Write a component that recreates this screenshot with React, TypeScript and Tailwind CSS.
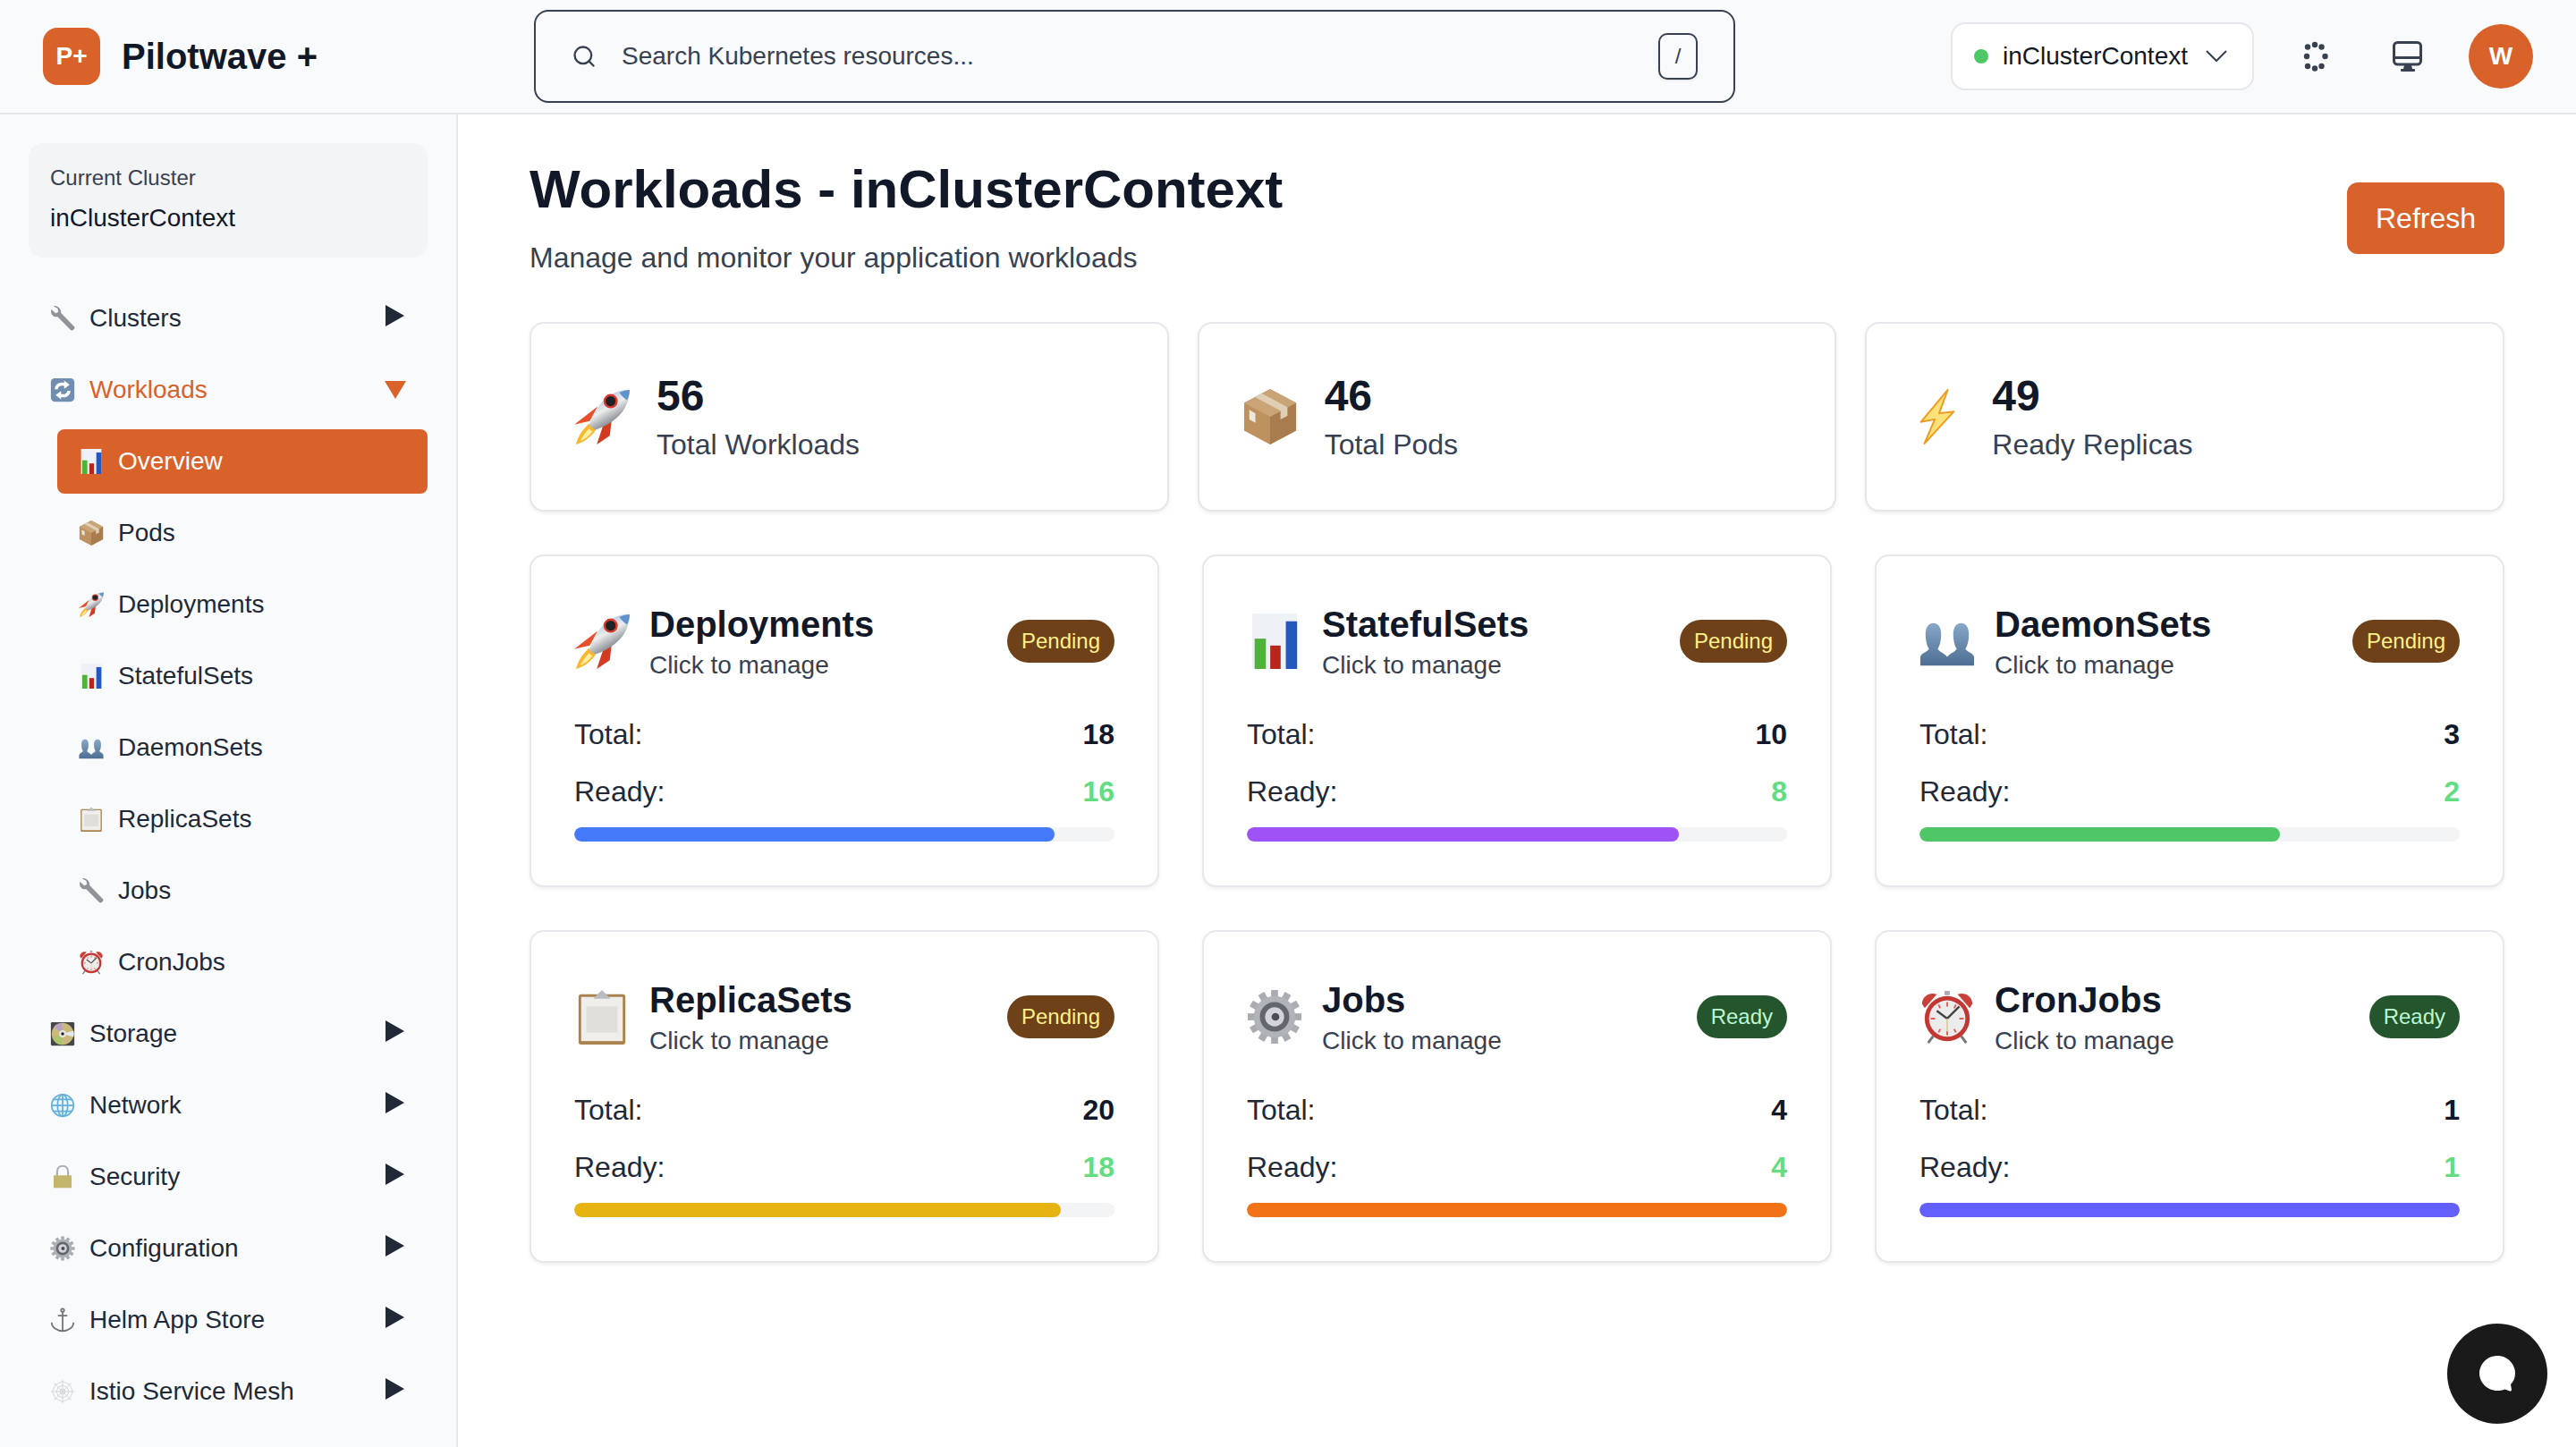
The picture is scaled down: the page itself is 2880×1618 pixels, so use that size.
import { Search } from "lucide-react";
import type { ReactNode } from "react";

function Rocket({ className }: { className?: string }) {
  return (
    <svg viewBox="0 0 64 64" className={className}>
      <defs>
        <linearGradient id="rocketBody" x1="0.2" y1="0" x2="0.8" y2="1">
          <stop offset="0" stopColor="#8fb0d6" />
          <stop offset="0.45" stopColor="#eceded" />
          <stop offset="0.75" stopColor="#8c9197" />
          <stop offset="1" stopColor="#4f7fb8" />
        </linearGradient>
      </defs>
      <path d="M27 20 L0 41 L18 37 Z" fill="#e8502c" />
      <path d="M37 31 L26 64 L41 54 L44 29 Z" fill="#d23a22" />
      <path d="M17 40 L25 47 C19 56 10 62 2 64 C4 56 9 47 17 40 Z" fill="#f9b62e" />
      <path d="M17 46 L21 49 C17 54 12 58 7 60 C9 55 13 50 17 46 Z" fill="#fff0a0" />
      <path d="M64 1 C50 0 36 8 28 20 C22 29 20 36 17 42 L24 47 C34 44 46 38 55 27 C61 19 64 10 64 1 Z" fill="url(#rocketBody)" />
      <path d="M64 1 C60 1 56 2 52 4 C55 8 58 11 61 13 C63 9 64 5 64 1 Z" fill="#5f93cf" />
      <circle cx="42" cy="14" r="7" fill="#1f2227" stroke="#d9392b" strokeWidth="2.5" />
    </svg>
  );
}

function Box({ className }: { className?: string }) {
  return (
    <svg viewBox="0 0 64 64" className={className}>
      <path d="M32 0 L62 16 L62 48 L32 64 L2 48 L2 16 Z" fill="#bd925f" />
      <path d="M32 32 L62 16 L62 48 L32 64 Z" fill="#a87c4f" />
      <path d="M2 16 L32 0 L62 16 L32 32 Z" fill="#c9a477" />
      <path d="M14 9 L44 25 L44 35 L52 31 L52 21 L22 5 Z" fill="#e0cfb4" />
      <path d="M8 24 L15 28 L15 39 L8 35 Z" fill="#ece8e0" />
    </svg>
  );
}

function Bolt({ className }: { className?: string }) {
  return (
    <svg viewBox="0 0 64 64" className={className}>
      <path d="M44 1 L13 38 L29 35 L17 63 L51 26 L34 28 Z" fill="#fde27a" stroke="#ee9a1e" strokeWidth="2" strokeLinejoin="round" />
    </svg>
  );
}

function Chart({ className }: { className?: string }) {
  return (
    <svg viewBox="0 0 64 64" className={className}>
      <rect x="6" y="0" width="52" height="64" fill="#eef2f6" />
      <rect x="9" y="29" width="13" height="35" fill="#4fb33a" />
      <rect x="27" y="37" width="12" height="27" fill="#b8251a" />
      <rect x="45" y="9" width="13" height="55" fill="#2458bd" />
    </svg>
  );
}

function People({ className }: { className?: string }) {
  return (
    <svg viewBox="0 0 64 64" className={className}>
      <defs>
        <linearGradient id="peopleFill" x1="0" y1="0" x2="0" y2="1">
          <stop offset="0" stopColor="#88a8c8" />
          <stop offset="1" stopColor="#4d6d92" />
        </linearGradient>
      </defs>
      <path d="M1 60 L1 50 C3 45 8 45 11 41 C8 36 7 30 7 24 C7 15 11 11 16 11 C21 11 25 15 25 24 C25 30 24 36 21 41 C24 45 29 46 32 50 C35 46 40 45 43 41 C40 36 39 30 39 24 C39 15 43 11 48 11 C53 11 57 15 57 24 C57 30 56 36 53 41 C56 45 61 45 63 50 L63 60 Z" fill="url(#peopleFill)" />
    </svg>
  );
}

function Clipboard({ className }: { className?: string }) {
  return (
    <svg viewBox="0 0 64 64" className={className}>
      <rect x="5" y="6" width="54" height="58" rx="3" fill="#a9824d" />
      <rect x="8" y="9" width="48" height="51" fill="#f0eeea" />
      <rect x="14" y="20" width="36" height="30" fill="#dfdedb" />
      <path d="M22 11 L27 6 L32 1 L37 6 L42 11 Z" fill="#b8bcc2" />
    </svg>
  );
}

function Gear({ className }: { className?: string }) {
  const teeth = [0, 30, 60, 90, 120, 150, 180, 210, 240, 270, 300, 330];
  return (
    <svg viewBox="0 0 64 64" className={className}>
      {teeth.map((a) => (
        <rect key={a} x="28" y="1" width="8" height="14" fill="#a9adb2" transform={`rotate(${a} 32 32)`} />
      ))}
      <circle cx="32" cy="32" r="24" fill="#b0b4b8" />
      <circle cx="32" cy="32" r="17" fill="#63676d" />
      <circle cx="32" cy="32" r="11" fill="#d2d4d7" />
      <circle cx="33" cy="32" r="4.5" fill="#4a4d52" />
    </svg>
  );
}

function Clock({ className }: { className?: string }) {
  return (
    <svg viewBox="0 0 64 64" className={className}>
      <path d="M16 54 L10 62 M48 54 L54 62" stroke="#777" strokeWidth="3" />
      <path d="M3 17 C3 8 12 3 20 6 L6 22 Z" fill="#c9403a" />
      <path d="M61 17 C61 8 52 3 44 6 L58 22 Z" fill="#c9403a" />
      <rect x="29" y="2" width="6" height="5" fill="#a9adb2" />
      <circle cx="32" cy="34" r="26" fill="#c43631" />
      <circle cx="32" cy="34" r="21" fill="#ececec" />
      <path d="M32 34 L20 25 M32 34 L46 20" stroke="#444" strokeWidth="2.5" />
      <path d="M32 34 L32 54" stroke="#d9c68a" strokeWidth="1.5" />
      <path d="M32 15 V20 M32 49 V53 M13 34 H18 M46 34 H51 M22 18 L24 22 M42 18 L40 22 M22 50 L24 46 M42 50 L40 46" stroke="#e0605a" strokeWidth="2" />
    </svg>
  );
}

function Wrench({ className }: { className?: string }) {
  return (
    <svg viewBox="0 0 64 64" className={className}>
      <path d="M4 10 L14 20 L22 16 L20 6 L10 1 C18 0 28 6 27 18 L62 54 C63 58 58 63 54 62 L19 27 C8 29 1 20 4 10 Z" fill="#8f9499" stroke="#6b6f74" strokeWidth="1" />
    </svg>
  );
}

function Sync({ className }: { className?: string }) {
  return (
    <svg viewBox="0 0 64 64" className={className}>
      <rect x="2" y="2" width="60" height="60" rx="10" fill="#6f8eb0" />
      <path d="M12 30 C12 18 24 10 36 14 L36 8 L50 19 L36 29 L36 22 C28 19 20 23 20 30 Z" fill="#fff" />
      <path d="M52 34 C52 46 40 54 28 50 L28 56 L14 45 L28 35 L28 42 C36 45 44 41 44 34 Z" fill="#fff" />
    </svg>
  );
}

function Disc({ className }: { className?: string }) {
  return (
    <svg viewBox="0 0 64 64" className={className}>
      <rect x="2" y="2" width="60" height="60" rx="3" fill="#45454a" />
      <circle cx="32" cy="32" r="28" fill="#c9b97a" />
      <path d="M32 32 L60 24 A28 28 0 0 1 60 40 Z" fill="#e8e8ea" />
      <path d="M32 32 L10 14 A28 28 0 0 1 30 4 Z" fill="#b7a2c4" />
      <path d="M32 32 L30 60 A28 28 0 0 1 6 42 Z" fill="#a9c46a" />
      <circle cx="32" cy="32" r="9" fill="#e8e8e0" />
      <circle cx="32" cy="32" r="4" fill="#222" />
    </svg>
  );
}

function Globe({ className }: { className?: string }) {
  return (
    <svg viewBox="0 0 64 64" className={className} fill="none" stroke="#62b0da" strokeWidth="4">
      <circle cx="32" cy="32" r="28" fill="#eaf5fb" />
      <ellipse cx="32" cy="32" rx="13" ry="28" />
      <path d="M32 4 V60 M4 32 H60 M9 17 H55 M9 47 H55" />
    </svg>
  );
}

function Lock({ className }: { className?: string }) {
  return (
    <svg viewBox="0 0 64 64" className={className}>
      <path d="M18 30 V20 C18 10 24 4 32 4 C40 4 46 10 46 20 V30" fill="none" stroke="#a9afb8" strokeWidth="5" />
      <rect x="9" y="28" width="46" height="32" rx="2" fill="#c4b56d" />
    </svg>
  );
}

function Anchor({ className }: { className?: string }) {
  return (
    <svg viewBox="0 0 64 64" className={className} fill="none" stroke="#6f747a" strokeWidth="4">
      <circle cx="32" cy="7" r="4" />
      <path d="M32 11 V60 M20 21 H44 M4 38 C4 52 20 60 32 60 C44 60 60 52 60 38" />
    </svg>
  );
}

function Web({ className }: { className?: string }) {
  return (
    <svg viewBox="0 0 64 64" className={className} fill="none" stroke="#cfd2d5" strokeWidth="2">
      <path d="M32 2 V62 M2 32 H62 M10 10 L54 54 M54 10 L10 54" />
      <path d="M32 6 L50 14 L58 32 L50 50 L32 58 L14 50 L6 32 L14 14 Z" />
      <path d="M32 16 L43 21 L48 32 L43 43 L32 48 L21 43 L16 32 L21 21 Z" />
      <path d="M32 25 L37 27 L39 32 L37 37 L32 39 L27 37 L25 32 L27 27 Z" />
    </svg>
  );
}

function LoaderDots() {
  const dots = [
    [13, 4], [5, 6.5], [20.5, 6.5], [4, 17], [24.5, 17], [5, 28], [20.5, 28], [13, 30.5],
  ];
  return (
    <svg viewBox="0 0 28 34" className="h-[34px] w-[28px]" fill="#374151">
      {dots.map(([x, y]) => (
        <circle key={`${x}-${y}`} cx={x} cy={y} r="3.2" />
      ))}
    </svg>
  );
}

function Monitor() {
  return (
    <svg viewBox="0 0 34 34" className="h-[34px] w-[34px]">
      <rect x="1.5" y="1.5" width="30" height="24.5" rx="4" fill="none" stroke="#374151" strokeWidth="3" />
      <rect x="1" y="17" width="31" height="3" fill="#374151" />
      <path d="M13 27 H21 L22 31 H12 Z" fill="#374151" />
      <rect x="9" y="31" width="16" height="3" rx="1" fill="#374151" />
    </svg>
  );
}

function Caret({ open }: { open?: boolean }) {
  if (open) {
    return (
      <svg viewBox="0 0 24 20" className="h-5 w-6">
        <path d="M0 0 H24 L12 20 Z" fill="#d9622b" />
      </svg>
    );
  }
  return (
    <svg viewBox="0 0 21 24" className="mr-0.5 h-6 w-[21px] -translate-y-[3px]">
      <path d="M0 0 L21 12 L0 24 Z" fill="#1f2937" />
    </svg>
  );
}

type NavIcon = (p: { className?: string }) => ReactNode;

const subNav: { label: string; icon: NavIcon; active?: boolean }[] = [
  { label: "Overview", icon: Chart, active: true },
  { label: "Pods", icon: Box },
  { label: "Deployments", icon: Rocket },
  { label: "StatefulSets", icon: Chart },
  { label: "DaemonSets", icon: People },
  { label: "ReplicaSets", icon: Clipboard },
  { label: "Jobs", icon: Wrench },
  { label: "CronJobs", icon: Clock },
];

const lowerNav: { label: string; icon: NavIcon }[] = [
  { label: "Storage", icon: Disc },
  { label: "Network", icon: Globe },
  { label: "Security", icon: Lock },
  { label: "Configuration", icon: Gear },
  { label: "Helm App Store", icon: Anchor },
  { label: "Istio Service Mesh", icon: Web },
];

const stats = [
  { value: "56", label: "Total Workloads", icon: Rocket },
  { value: "46", label: "Total Pods", icon: Box },
  { value: "49", label: "Ready Replicas", icon: Bolt },
];

const workloads = [
  { name: "Deployments", icon: Rocket, status: "Pending", total: 18, ready: 16, bar: "bg-[#4479f8]" },
  { name: "StatefulSets", icon: Chart, status: "Pending", total: 10, ready: 8, bar: "bg-[#9f52f5]" },
  { name: "DaemonSets", icon: People, status: "Pending", total: 3, ready: 2, bar: "bg-[#50c766]" },
  { name: "ReplicaSets", icon: Clipboard, status: "Pending", total: 20, ready: 18, bar: "bg-[#e6b412]" },
  { name: "Jobs", icon: Gear, status: "Ready", total: 4, ready: 4, bar: "bg-[#f27317]" },
  { name: "CronJobs", icon: Clock, status: "Ready", total: 1, ready: 1, bar: "bg-[#635ffa]" },
];

function TopNavItem({ label, icon: Icon, open }: { label: string; icon: NavIcon; open?: boolean }) {
  return (
    <div className={`flex h-[72px] items-center rounded-lg pr-6 pl-6 text-[28px] ${open ? "text-[#d9622b]" : "text-[#1f2937]"}`}>
      <Icon className="mr-4 size-7 shrink-0" />
      <span className="flex-1">{label}</span>
      <Caret open={open} />
    </div>
  );
}

export default function App() {
  return (
    <div className="relative flex h-[1618px] w-[2880px] flex-col overflow-hidden bg-white font-['Liberation_Sans',Arial,sans-serif] text-[#111827]">
      <header className="flex h-[128px] shrink-0 items-center border-b-2 border-[#e5e7eb] bg-[#f9fafb] pr-12 pl-12">
        <div className="flex w-[549px] items-center gap-6">
          <div className="flex size-16 items-center justify-center rounded-2xl bg-[#d9622b] text-[28px] font-bold text-white">P+</div>
          <span className="text-[40px] font-bold">Pilotwave +</span>
        </div>
        <div className="flex h-[104px] w-[1343px] items-center rounded-2xl border-2 border-[#374151] pr-10 pl-10">
          <Search className="mr-[28px] size-7 shrink-0 text-[#374151]" strokeWidth={2} />
          <span className="flex-1 text-[28px] text-[#374151]">Search Kubernetes resources...</span>
          <span className="flex h-[52px] w-[44px] items-center justify-center rounded-[10px] border-2 border-[#374151] text-2xl text-[#374151] shadow-sm">/</span>
        </div>
        <div className="ml-auto flex items-center">
          <div className="flex h-[76px] w-[339px] items-center rounded-2xl border-2 border-[#e5e7eb] bg-white pl-6">
            <span className="size-4 rounded-full bg-[#4ec865]" />
            <span className="ml-4 text-[28px]">inClusterContext</span>
            <svg viewBox="0 0 24 14" className="ml-[20px] h-[14px] w-6" fill="none" stroke="#374151" strokeWidth="2">
              <path d="M1 1 L12 12 L23 1" />
            </svg>
          </div>
          <div className="ml-[55px]">
            <LoaderDots />
          </div>
          <div className="ml-[72px]">
            <Monitor />
          </div>
          <div className="ml-[51px] flex size-[72px] items-center justify-center rounded-full bg-[#d9622b] text-[28px] font-bold text-white">W</div>
        </div>
      </header>

      <div className="flex min-h-0 flex-1">
        <aside className="w-[512px] shrink-0 border-r-2 border-[#e5e7eb] bg-[#f9fafb] pt-8 pr-8 pl-8">
          <div className="mb-8 flex h-32 flex-col justify-center rounded-2xl bg-[#f3f4f6] pl-6">
            <div className="text-2xl text-[#374151]">Current Cluster</div>
            <div className="mt-2 text-[28px]">inClusterContext</div>
          </div>
          <nav className="flex flex-col gap-2">
            <TopNavItem label="Clusters" icon={Wrench} />
            <TopNavItem label="Workloads" icon={Sync} open />
            <div className="flex flex-col gap-2 pl-8">
              {subNav.map(({ label, icon: Icon, active }) => (
                <div key={label} className={`flex h-[72px] items-center rounded-lg pl-6 text-[28px] ${active ? "bg-[#d9622b] text-white" : "text-[#1f2937]"}`}>
                  <Icon className="mr-4 size-7 shrink-0" />
                  {label}
                </div>
              ))}
            </div>
            {lowerNav.map((item) => (
              <TopNavItem key={item.label} label={item.label} icon={item.icon} />
            ))}
          </nav>
        </aside>

        <main className="min-w-0 flex-1 pt-12 pr-20 pl-20">
          <div className="flex items-center justify-between">
            <div>
              <h1 className="text-6xl leading-[72px] font-bold">Workloads - inClusterContext</h1>
              <p className="mt-4 text-[32px] leading-12 text-[#374151]">Manage and monitor your application workloads</p>
            </div>
            <button className="h-20 w-[176px] rounded-xl bg-[#d9622b] text-[32px] text-white">Refresh</button>
          </div>

          <div className="mt-[48px] grid grid-cols-3 gap-8">
            {stats.map(({ value, label, icon: Icon }) => (
              <div key={label} className="flex h-[212px] items-center rounded-2xl border-2 border-[#e5e7eb] bg-white pl-12 shadow-[0_2px_4px_rgba(0,0,0,0.07)]">
                <Icon className="mr-[30px] size-[62px] shrink-0" />
                <div className="-mt-0.5">
                  <div className="text-5xl leading-[60px] font-bold">{value}</div>
                  <div className="mt-1 text-[32px] leading-10 text-[#374151]">{label}</div>
                </div>
              </div>
            ))}
          </div>

          <div className="mt-12 grid grid-cols-3 gap-12">
            {workloads.map(({ name, icon: Icon, status, total, ready, bar }) => (
              <div key={name} className="h-[372px] rounded-2xl border-2 border-[#e5e7eb] bg-white px-12 pt-[50px] shadow-[0_2px_4px_rgba(0,0,0,0.07)]">
                <div className="flex items-center justify-between">
                  <div className="flex items-center">
                    <Icon className="mr-[22px] size-[62px] shrink-0" />
                    <div>
                      <div className="text-[40px] leading-[52px] font-bold">{name}</div>
                      <div className="mt-0.5 text-[28px] leading-9 text-[#374151]">Click to manage</div>
                    </div>
                  </div>
                  <span className={`rounded-full px-4 text-2xl leading-12 ${status === "Ready" ? "bg-[#25552d] text-[#bbf7d0]" : "bg-[#6e4118] text-[#fef08a]"}`}>{status}</span>
                </div>
                <div className="mt-[35px] flex justify-between text-[32px] leading-12 text-[#1f2937]">
                  <span>Total:</span>
                  <span className="font-bold text-[#111827]">{total}</span>
                </div>
                <div className="mt-4 flex justify-between text-[32px] leading-12 text-[#1f2937]">
                  <span>Ready:</span>
                  <span className="font-bold text-[#63dc82]">{ready}</span>
                </div>
                <div className="mt-4 h-4 overflow-hidden rounded-full bg-[#f3f4f6]">
                  <div className={`h-4 rounded-full ${bar}`} style={{ width: `${(ready / total) * 100}%` }} />
                </div>
              </div>
            ))}
          </div>
        </main>
      </div>

      <button className="absolute right-8 bottom-[26px] flex size-28 items-center justify-center rounded-full bg-[#1a1a1a]">
        <svg viewBox="0 0 40 40" className="size-10">
          <path d="M20 0 C31 0 40 9 40 19.5 C40 25 38 29 35 32 L36 38 C36 39 35 40 34 39.5 L28.5 37.5 C26 38.5 23 39 20 39 C9 39 0 30 0 19.5 C0 9 9 0 20 0 Z" fill="#fff" />
        </svg>
      </button>
    </div>
  );
}
